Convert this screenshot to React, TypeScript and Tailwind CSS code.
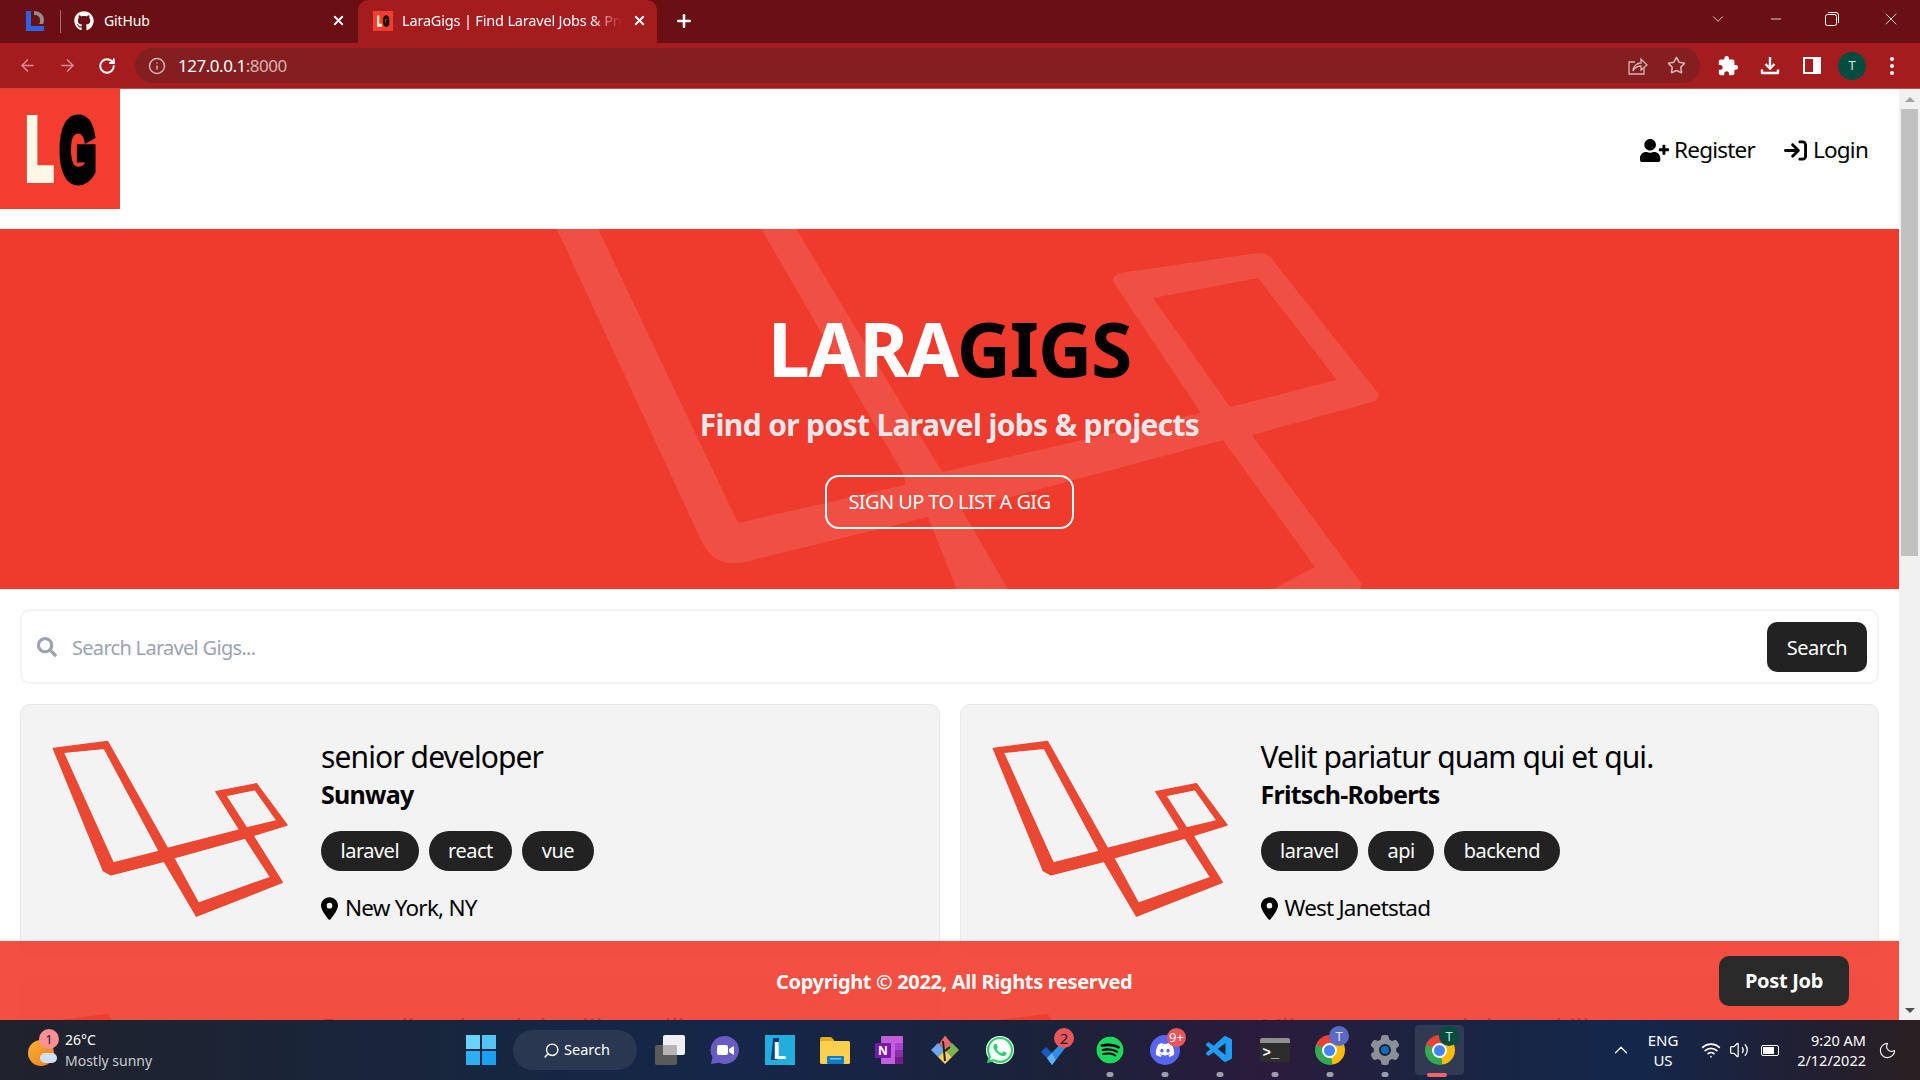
import React from "react";
import { ArrowLeft, ArrowRight, RotateCw, Info, Star, ChevronDown, ChevronUp, Minus, X, Plus, Wifi, Volume2, Moon, Search as SearchLine } from "lucide-react";
import { FaGithub, FaUserPlus, FaDiscord, FaWhatsapp, FaSpotify, FaSearch } from "react-icons/fa";
import { FaArrowRightToBracket, FaLocationDot, FaGear } from "react-icons/fa6";
import { MdExtension } from "react-icons/md";
import { VscVscode } from "react-icons/vsc";

const LaravelMark = () => (
  <svg width="238" height="180" viewBox="155 150 715 540" className="shrink-0">
    <path
      fillRule="evenodd"
      fill="#ea4832"
      stroke="#ea4832"
      strokeWidth="4"
      strokeLinejoin="round"
      d="M162 178 325 157 505 478 722 423 650 308 772 284 864 408 762 440 850 580 592 682 495 517 335 558 312 545Z M192 190 315 178 480 487 342 522Z M680 320 768 302 834 395 743 417Z M524 507 738 447 815 565 598 643Z"
    />
  </svg>
);

const HeroMark = () => (
  <svg className="absolute inset-0" width="1900" height="360" viewBox="0 229 1900 360">
    <path
      fillRule="evenodd"
      fill="#ffffff"
      fillOpacity="0.11"
      d="M511 130 737 130 942 472 1201 413 1114 283 Q1110 277 1120 273 L1258 253 Q1268 252 1275 263 L1378 393 Q1380 400 1372 402 L1252 435 1361 583 1361 700 1001 700 928 517 753 560 Q715 572 701 540Z M551 130 704 130 905 477 905 485 738 523Z M1153 298 1258 278 1337 380 1230 407Z M962 510 1223 440 1315 567 1100 680 1043 650Z"
    />
  </svg>
);

const LgLogo = ({ size }: { size: number }) => (
  <svg width={size} height={size} viewBox="0 0 120 120" className="shrink-0">
    <rect width="120" height="120" fill="#f23d2f" />
    <text x="26" y="90" fontFamily="Liberation Sans" fontWeight="700" fontSize="87" fill="#fff8e7" stroke="#fff8e7" strokeWidth="8" textLength="27" lengthAdjust="spacingAndGlyphs">L</text>
    <text x="60" y="91" fontFamily="Liberation Sans" fontWeight="700" fontSize="87" fill="#000" stroke="#000" strokeWidth="9" textLength="36" lengthAdjust="spacingAndGlyphs">G</text>
  </svg>
);

const Tag = ({ children }: { children: React.ReactNode }) => (
  <span className="flex h-[40px] items-center rounded-full bg-[#222222] px-[19.5px] text-[20px] tracking-[-0.025em] text-white">{children}</span>
);

const Card = ({ title, company, tags, location }: { title: string; company: string; tags: string[]; location: string }) => (
  <div className="flex h-[252px] gap-[32px] rounded-[10px] border border-[#e9e9e9] bg-[#f3f3f3] pl-[30px] pt-[34px]">
    <LaravelMark />
    <div className="flex flex-col">
      <h3 className="h-[36px] text-[30px] leading-[36px] tracking-[-0.03em] text-black">{title}</h3>
      <div className="mt-[2px] h-[34px] text-[25px] font-bold leading-[34px] tracking-[-0.03em] text-black">{company}</div>
      <div className="mt-[20px] flex gap-[10px]">
        {tags.map((t) => (
          <Tag key={t}>{t}</Tag>
        ))}
      </div>
      <div className="mt-[22px] flex h-[30px] items-center gap-[7px] text-[22.5px] tracking-[-0.035em] text-black">
        <FaLocationDot className="h-[23px] w-[17px]" />
        {location}
      </div>
    </div>
  </div>
);

const Dot = () => <span className="absolute bottom-[3px] left-1/2 h-[5px] w-[7px] -translate-x-1/2 rounded-full bg-[#9aa0ab]" />;

const Badge = ({ children, className }: { children: React.ReactNode; className: string }) => (
  <span className={"absolute flex items-center justify-center rounded-full text-[13px] leading-none " + className}>{children}</span>
);

const ChromeIcon = () => (
  <div className="relative flex h-[30px] w-[30px] items-center justify-center rounded-full bg-[conic-gradient(#ea4335_0deg_50deg,#fbbc04_50deg_170deg,#34a853_170deg_290deg,#ea4335_290deg_360deg)]">
    <div className="h-[15px] w-[15px] rounded-full border-[2px] border-white bg-[#4285f4]" />
  </div>
);

const Slot = ({ children, dot }: { children: React.ReactNode; dot?: boolean }) => (
  <div className="relative flex h-[60px] w-[55px] items-center justify-center">
    {children}
    {dot && <Dot />}
  </div>
);

export default function App() {
  return (
    <div className="flex h-screen w-full flex-col overflow-hidden bg-white font-['Noto_Sans',sans-serif]">
      {/* tab strip */}
      <div className="flex h-[43px] shrink-0 items-stretch bg-[#6b1012] text-white">
        <div className="flex w-[60px] items-center justify-center pb-[2px] pl-[10px]">
          <svg width="20" height="22" viewBox="0 0 20 22">
            <path d="M1 1h5v15h13v5H1z" fill="#2a62e8" />
            <path d="M9 1c6 0 10 4 10 9 0 2-.5 3-1 4h-4c1-1 1-2 1-4 0-3-2-5-6-5z" fill="#8d8d8d" />
          </svg>
        </div>
        <div className="my-[10px] w-px bg-[#a86a6b]" />
        <div className="flex w-[297px] items-center pb-[2px] pl-[13px] pr-[10px]">
          <FaGithub size={20} />
          <span className="ml-[10px] text-[14px] tracking-[-0.01em]">GitHub</span>
          <X size={15} strokeWidth={3} className="ml-auto mr-[2px]" />
        </div>
        <div className="flex w-[299px] items-center rounded-t-[10px] bg-[#a51c1f] pb-[2px] pl-[15px] pr-[10px]">
          <LgLogo size={20} />
          <span className="ml-[9px] w-[222px] overflow-hidden whitespace-nowrap text-[14.5px] tracking-[-0.012em] [mask-image:linear-gradient(90deg,#000_85%,transparent_99%)]">
            LaraGigs | Find Laravel Jobs &amp; Pro
          </span>
          <X size={15} strokeWidth={3} className="ml-auto" />
        </div>
        <div className="flex w-[54px] items-center justify-center pb-[2px]">
          <Plus size={20} strokeWidth={3} />
        </div>
        <div className="ml-auto flex items-center pb-[5px] pr-[19px]">
          <ChevronDown size={18} strokeWidth={1} className="mr-[41px]" />
          <Minus size={16} strokeWidth={1.2} className="mr-[41px]" />
          <svg width="14" height="14" viewBox="0 0 14 14" fill="none" stroke="white" className="mr-[42px]">
            <rect x="0.5" y="2.5" width="11" height="11" rx="2" />
            <path d="M3 .5h8a2.500 2.500 0 0 1 2.500 2.500v8" />
          </svg>
          <X size={20} strokeWidth={1} />
        </div>
      </div>

      {/* toolbar */}
      <div className="flex h-[46px] shrink-0 items-center border-b border-[#c8484a] bg-[#a51c1f] text-white">
        <div className="flex w-[135px] items-center pl-[18px]">
          <ArrowLeft size={19} className="text-[#d98a8b]" />
          <ArrowRight size={19} className="ml-[21px] text-[#d98a8b]" />
          <RotateCw size={18} strokeWidth={2.6} className="ml-[21px]" />
        </div>
        <div className="flex h-[35px] w-[1565px] items-center rounded-full bg-[#841e20] pl-[13px] pr-[14px]">
          <Info size={18} className="text-[#cfb5b5]" />
          <span className="ml-[12px] text-[17px] tracking-[-0.028em]">
            127.0.0.1<span className="text-[#d6b4b4]">:8000</span>
          </span>
          <svg width="20" height="20" viewBox="0 0 20 20" fill="none" stroke="#d6b4b4" strokeWidth="1.300" className="ml-auto mr-[19px]">
            <path d="M16 12v6H1V6h6" />
            <path d="M5 15c0-5 4-8 8-8V3l6 6-6 5v-4c-4 0-6 1-8 5z" />
          </svg>
          <Star size={19} className="text-[#d6b4b4]" />
        </div>
        <div className="flex flex-1 items-center pl-[17px]">
          <MdExtension size={22} />
          <svg width="20" height="20" viewBox="0 0 20 20" fill="none" stroke="white" strokeWidth="2.400" className="ml-[21px]">
            <path d="M10 1v11M5.500 8l4.500 4.500L14.500 8" />
            <path d="M2 13.500v3.500h16v-3.500" strokeLinejoin="round" />
          </svg>
          <div className="ml-[23px] flex h-[17px] w-[18px] justify-end border-[2px] border-white">
            <div className="w-[6px] bg-white" />
          </div>
          <div className="ml-[17px] flex h-[28px] w-[28px] items-center justify-center rounded-full bg-[#024d40] text-[13px] text-[#d5e5e0]">T</div>
          <div className="ml-[24px] flex flex-col gap-[3px]">
            <span className="h-[4px] w-[4px] rounded-full bg-white" />
            <span className="h-[4px] w-[4px] rounded-full bg-white" />
            <span className="h-[4px] w-[4px] rounded-full bg-white" />
          </div>
        </div>
      </div>

      {/* page */}
      <div className="relative flex min-h-0 flex-1">
        <div className="min-w-0 flex-1 overflow-hidden">
          <nav className="flex h-[120px] items-center justify-between">
            <LgLogo size={120} />
            <div className="flex items-center pr-[31px] pt-[2px] text-[22.5px] tracking-[-0.035em] text-black">
              <FaUserPlus size={29} className="mr-[5px]" />
              <span>Register</span>
              <FaArrowRightToBracket size={23} className="ml-[29px] mr-[6px]" />
              <span>Login</span>
            </div>
          </nav>

          <section className="relative mt-[20px] flex h-[360px] flex-col items-center overflow-hidden bg-[#ef3b2d] pt-[77px]">
            <HeroMark />
            <h1 className="relative h-[84px] text-[75px] font-bold leading-[84px] tracking-[-0.015em] text-white">
              LARA<span className="text-black">GIGS</span>
            </h1>
            <p className="relative mt-[15px] h-[40px] text-[30px] font-bold leading-[40px] tracking-[-0.022em] text-[#e5e7eb]">
              Find or post Laravel jobs &amp; projects
            </p>
            <a className="relative mt-[30px] flex h-[54px] w-[249px] items-center justify-center rounded-[14px] border-2 border-white text-[20px] uppercase tracking-[-0.03em] text-white">
              Sign Up to List a Gig
            </a>
          </section>

          <div className="mx-[20px] mt-[20px] flex h-[75px] items-center rounded-[10px] border-2 border-[#f3f4f6] pl-[15px] pr-[10px]">
            <FaSearch size={20} className="text-[#9ca3af]" />
            <span className="ml-[15px] pt-[2px] text-[20px] tracking-[-0.035em] text-[#9ca3af]">Search Laravel Gigs...</span>
            <button className="ml-auto h-[50px] w-[100px] rounded-[10px] bg-[#222222] pt-[2px] text-[20px] tracking-[-0.025em] text-white">Search</button>
          </div>

          <div className="mx-[20px] mt-[20px] grid grid-cols-2 gap-x-[20px] gap-y-[21px]">
            <Card title="senior developer" company="Sunway" tags={["laravel", "react", "vue"]} location="New York, NY" />
            <Card title="Velit pariatur quam qui et qui." company="Fritsch-Roberts" tags={["laravel", "api", "backend"]} location="West Janetstad" />
            <Card title="Repudiandae dolor libero illo" company="Sunway" tags={["laravel"]} location="Boston, MA" />
            <Card title="Ullam tenetur dolor ad illum" company="Sunway" tags={["laravel"]} location="Boston, MA" />
          </div>
        </div>

        {/* scrollbar */}
        <div className="flex w-[21px] shrink-0 flex-col items-center bg-[#f1f1f1]">
          <div className="flex h-[20px] items-center justify-center">
            <div className="h-0 w-0 border-x-[5px] border-b-[5px] border-x-transparent border-b-[#a3a3a3]" />
          </div>
          <div className="h-[447px] w-[17px] bg-[#c1c1c1]" />
          <div className="mt-auto flex h-[20px] items-center justify-center">
            <div className="h-0 w-0 border-x-[5px] border-t-[5px] border-x-transparent border-t-[#505050]" />
          </div>
        </div>

        {/* fixed footer */}
        <footer className="absolute bottom-0 left-0 flex h-[79px] w-[1899px] items-center bg-[#f23c2e]/90 text-white">
          <span className="ml-[776px] pt-[2px] text-[20px] font-bold tracking-[-0.017em]">Copyright © 2022, All Rights reserved</span>
          <button className="ml-auto mr-[50px] h-[50px] w-[130px] rounded-[10px] bg-[#2a2a2a] text-[20px] font-bold tracking-[-0.015em]">Post Job</button>
        </footer>
      </div>

      {/* taskbar */}
      <div className="flex h-[60px] shrink-0 items-center bg-[linear-gradient(90deg,#20222c_0%,#17263f_25%,#152649_38%,#1b2238_55%,#2b1b3c_66%,#1b2440_74%,#13274c_85%,#231f30_95%,#2a2022_100%)] text-white">
        <div className="relative flex w-[466px] shrink-0 items-center pl-[28px]">
          <div className="relative mt-[6px] h-[26px] w-[26px] rounded-full bg-[linear-gradient(135deg,#f9b233,#ee7d1f)]">
            <div className="absolute bottom-[3px] right-[-3px] h-[10px] w-[17px] rounded-full bg-[#cfe0f5]" />
          </div>
          <Badge className="left-[39px] top-[0px] h-[20px] w-[20px] bg-[#ff8f97] text-[#222]">1</Badge>
          <div className="ml-[11px] flex flex-col text-[14px] leading-[21px]">
            <span>26°C</span>
            <span className="text-[#c9ccd3]">Mostly sunny</span>
          </div>
        </div>

        <div className="grid h-[30px] w-[30px] shrink-0 grid-cols-2 gap-[2px]">
          <span className="bg-[#6ad3f8]" />
          <span className="bg-[#52c5f5]" />
          <span className="bg-[#2cb0f3]" />
          <span className="bg-[#19a0f0]" />
        </div>

        <div className="ml-[17px] flex h-[40px] w-[124px] shrink-0 items-center rounded-full bg-[#2a3750] pl-[30px] text-[14.5px]">
          <SearchLine size={17} className="-scale-x-100" />
          <span className="ml-[4px]">Search</span>
        </div>

        <div className="ml-[5px] flex shrink-0 items-center">
          <Slot>
            <div className="relative h-[30px] w-[30px]">
              <div className="absolute bottom-0 left-0 h-[20px] w-[22px] rounded-[2px] bg-[#5a5a5a]" />
              <div className="absolute right-0 top-0 h-[20px] w-[22px] rounded-[2px] bg-[#efefef]" />
              <div className="absolute bottom-[10px] left-[8px] h-[10px] w-[14px] rounded-[1px] bg-[#b5b5b5]" />
            </div>
          </Slot>
          <Slot>
            <svg width="30" height="30" viewBox="0 0 30 30">
              <path d="M15 1a14 14 0 1 1-6 26.700L1 29l1.500-7A14 14 0 0 1 15 1z" fill="#6a5bc2" />
              <rect x="7" y="10" width="11" height="10" rx="2" fill="#fff" />
              <path d="M19 14l5-3v9l-5-3z" fill="#fff" />
            </svg>
          </Slot>
          <Slot>
            <div className="relative flex h-[30px] w-[30px] items-center justify-center bg-[#22aedd] text-[24px] font-bold text-white">
              <span className="absolute left-[7px] top-[3px] h-[22px] w-[6px] -skew-x-6 bg-[#123a7c]" />
              <span className="relative">L</span>
            </div>
          </Slot>
          <Slot>
            <svg width="30" height="30" viewBox="0 0 30 30">
              <path d="M0 4a2 2 0 0 1 2-2h9l3 3v5H0z" fill="#e9a91c" />
              <rect y="6" width="30" height="23" rx="1.500" fill="#fcd04f" />
              <rect x="7" y="21" width="17" height="8" rx="1" fill="#0f7cc4" />
              <rect x="10" y="23" width="11" height="1.500" fill="#7cc4ee" />
            </svg>
          </Slot>
          <Slot>
            <svg width="30" height="30" viewBox="0 0 30 30">
              <rect x="6" y="1" width="22" height="28" rx="1" fill="#c35fdd" />
              <rect x="20" y="8" width="8" height="7" fill="#a743c8" />
              <rect x="20" y="15" width="8" height="7" fill="#8c2fa8" />
              <rect x="20" y="22" width="8" height="7" fill="#701f8a" />
              <rect x="0" y="8" width="16" height="15" rx="1" fill="#7719aa" />
              <text x="8" y="20" textAnchor="middle" fontFamily="Noto Sans" fontSize="12" fontWeight="700" fill="#fff">N</text>
            </svg>
          </Slot>
          <Slot>
            <svg width="30" height="30" viewBox="0 0 30 30">
              <path d="M15 0.500 22 9 15 15 9 9z" fill="#e66a6a" />
              <path d="M1 15l7-7 7 7-7 7z" fill="#6ea6f0" />
              <path d="M15 15l7-7 7 7-7 7z" fill="#7fb24a" />
              <path d="M15 15l7 7-7 7-7-7z" fill="#f0d060" />
              <path d="M13 6l2 20M20 12l-5 4" stroke="#222" strokeWidth="2" />
            </svg>
          </Slot>
          <Slot>
            <div className="relative flex h-[28px] w-[28px] items-center justify-center rounded-full bg-white">
              <FaWhatsapp size={30} className="absolute text-[#25d366]" />
            </div>
          </Slot>
          <Slot>
            <svg width="28" height="26" viewBox="0 0 28 26" className="mt-[4px]">
              <path d="M0 13l5-5 6 6-5 5z" fill="#185abd" />
              <path d="M6 19L24 0l4 4-17 22z" fill="#2f8de4" />
              <path d="M6 19l5 7 3.500-5-3.500-7z" fill="#5fb2f2" />
            </svg>
            <Badge className="left-[27px] top-[8px] h-[20px] w-[20px] bg-[#e8555a] text-[15px] text-[#222]">2</Badge>
          </Slot>
          <Slot dot>
            <div className="relative flex h-[28px] w-[28px] items-center justify-center rounded-full bg-black">
              <FaSpotify size={28} className="text-[#1ed760]" />
            </div>
          </Slot>
          <Slot dot>
            <div className="flex h-[30px] w-[30px] items-center justify-center rounded-full bg-[#5865f2]">
              <FaDiscord size={20} className="text-white" />
            </div>
            <Badge className="left-[30px] top-[8px] h-[19px] w-[19px] bg-[#e8555a] text-[11px] text-white">9+</Badge>
          </Slot>
          <Slot dot>
            <VscVscode size={32} className="text-[#1f9cf0]" />
          </Slot>
          <Slot dot>
            <div className="flex h-[24px] w-[30px] flex-col overflow-hidden rounded-[2px] bg-[#2d2d2d]">
              <div className="h-[5px] bg-[#8f8f8f]" />
              <div className="flex flex-1 items-center pl-[3px] font-['Liberation_Mono'] text-[14px] font-bold leading-none text-white">&gt;_</div>
            </div>
          </Slot>
          <Slot dot>
            <ChromeIcon />
            <Badge className="left-[27px] top-[6px] h-[20px] w-[20px] bg-[#5b6ac0] text-[#dfe3ff]">T</Badge>
          </Slot>
          <Slot dot>
            <div className="relative flex items-center justify-center">
              <FaGear size={30} className="text-[#8b9098]" />
              <span className="absolute h-[12px] w-[12px] rounded-full border-[2px] border-[#1d2230] bg-[#0f6cbd]" />
            </div>
          </Slot>
          <Slot>
            <div className="absolute inset-x-[3px] inset-y-[5px] rounded-[4px] bg-white/10" />
            <div className="relative">
              <ChromeIcon />
            </div>
            <Badge className="left-[27px] top-[6px] h-[20px] w-[20px] bg-[#024d40] text-[#d5e5e0]">T</Badge>
            <span className="absolute bottom-[3px] left-[15px] h-[4px] w-[20px] rounded-full bg-[#f56565]" />
          </Slot>
        </div>

        <div className="ml-auto flex items-center pr-[23px] text-[15px]">
          <ChevronUp size={22} strokeWidth={1.300} />
          <div className="ml-[11px] flex w-[40px] flex-col items-center leading-[20px]">
            <span>ENG</span>
            <span>US</span>
          </div>
          <Wifi size={20} className="ml-[18px]" />
          <Volume2 size={20} strokeWidth={1.500} className="ml-[8px]" />
          <div className="ml-[12px] flex h-[11px] w-[18px] items-center rounded-[2px] border border-white p-[1px]">
            <div className="h-full w-[11px] bg-white" />
          </div>
          <div className="ml-[15px] flex w-[72px] flex-col items-end whitespace-nowrap text-[14.5px] leading-[20px]">
            <span>9:20 AM</span>
            <span>2/12/2022</span>
          </div>
          <Moon size={19} strokeWidth={1.300} className="ml-[12px]" />
        </div>
      </div>
    </div>
  );
}
